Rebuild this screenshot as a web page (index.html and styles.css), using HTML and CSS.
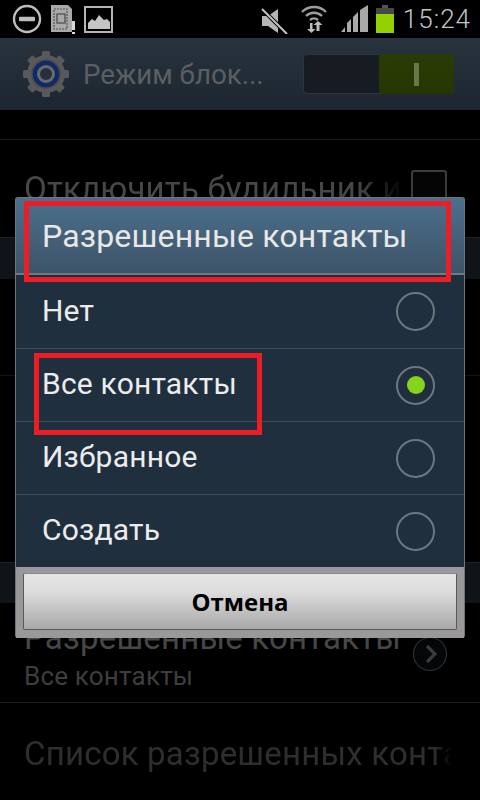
FILE: index.html
```html
<!DOCTYPE html>
<html lang="ru">
<head>
<meta charset="utf-8">
<title>Режим блокировки</title>
<link rel="stylesheet" href="styles.css">
</head>
<body>
<div class="screen">
  <header class="status">
    <div class="status-left">
      <svg class="ic" width="30" height="30" viewBox="0 0 30 30"><circle cx="15" cy="15" r="13" fill="none" stroke="#bdbdbd" stroke-width="2.4"/><rect x="7" y="12.8" width="16" height="4.4" rx="1" fill="#bdbdbd"/></svg>
      <svg class="ic" width="26" height="30" viewBox="0 0 26 30"><path d="M1 1h17l4 4v23H1z" fill="#a9a9a9"/><path d="M4 5h13v20H4z" fill="none" stroke="#555" stroke-width="1.2" stroke-dasharray="2 1"/><rect x="7" y="10" width="8" height="9" fill="#a9a9a9" stroke="#555" stroke-width="1.400"/><rect x="22" y="17" width="3" height="9" fill="#d8d8d8"/><rect x="22" y="28" width="3" height="2" fill="#ddd"/></svg>
      <svg class="ic" width="29" height="27" viewBox="0 0 29 27"><rect x="1" y="1" width="27" height="25" fill="none" stroke="#b5b5b5" stroke-width="2"/><path d="M4 23v-6l4-4 3 2 4-6 5 5 3-1 3 3v7z" fill="#c4c4c4"/></svg>
    </div>
    <div class="status-right">
      <svg class="ic ic-mute" width="27" height="26" viewBox="0 0 27 26"><path d="M1 8h6l10-7v24L7 18H1z" fill="#b5b5b5"/><path d="M1 1l25 25" stroke="#000" stroke-width="4"/><path d="M1 1l25 25" stroke="#c4c4c4" stroke-width="2"/></svg>
      <svg class="ic ic-wifi" width="26" height="28" viewBox="0 0 26 28"><path d="M1 7a17 17 0 0 1 24 0M5 11a11.500 11.500 0 0 1 16 0M9 15a6 6 0 0 1 8 0" fill="none" stroke="#9d9d9d" stroke-width="2.4"/><path d="M9 18v6H6l4.500 4 4-4h-3v-6zM17 16l-4.500 4h3v6h3v-6h3z" fill="#bdbdbd"/></svg>
      <svg class="ic ic-sig" width="29" height="28" viewBox="0 0 29 28"><path d="M1 27l4-5v5zM7 27v-9l4-4v13zM13 27V12l5-5v20zM20 27V5l8-5v27z" fill="#a9a9a9"/></svg>
      <svg class="ic ic-batt" width="18" height="28" viewBox="0 0 18 28"><rect x="6" y="0" width="6" height="3" fill="#555"/><rect x="0" y="3" width="18" height="8" fill="#484848"/><rect x="0" y="9" width="18" height="19" fill="#95d000"/></svg>
      <span class="time">15:24</span>
    </div>
  </header>

  <div class="actionbar">
    <svg class="gear" width="46" height="46" viewBox="0 0 46 46">
      <g fill="#59595b"><circle cx="23" cy="23" r="19"/><rect x="19" y="0" width="8" height="46" rx="1.500"/><rect x="19" y="0" width="8" height="46" rx="1.500" transform="rotate(45 23 23)"/><rect x="19" y="0" width="8" height="46" rx="1.500" transform="rotate(90 23 23)"/><rect x="19" y="0" width="8" height="46" rx="1.500" transform="rotate(135 23 23)"/></g>
      <circle cx="23" cy="23" r="14" fill="#0f2a68"/><circle cx="23" cy="23" r="14" fill="none" stroke="#4a4a4c" stroke-width="1.500"/><circle cx="23" cy="23" r="7.500" fill="#25303a" stroke="#6a6a6c" stroke-width="3"/>
    </svg>
    <span class="ab-title">Режим блок...</span>
    <div class="switch"><div class="switch-on"><span class="switch-grip"></span></div></div>
  </div>

  <main class="list">
    <div class="row-top"></div>
    <div class="row row-check">
      <span class="row-text fade">Отключить будильник и</span>
      <span class="check"></span>
    </div>
    <div class="band band-1"></div>
    <div class="gap-a"></div>
    <div class="gap-b"></div>
    <div class="band band-2"></div>
    <div class="row row-nav">
      <div class="row-body">
        <span class="row-text">Разрешенные контакты</span>
        <span class="row-sub">Все контакты</span>
      </div>
      <svg class="nav" width="36" height="36" viewBox="0 0 36 36"><circle cx="18" cy="18" r="16.500" fill="#050607" stroke="#2a2e31" stroke-width="1.200"/><path d="M15 10l8 8-8 8" fill="none" stroke="#343c44" stroke-width="3.200"/></svg>
    </div>
    <div class="row row-last"><span class="row-text dim">Список разрешенных конта</span></div>
  </main>

  <section class="dialog">
    <h1 class="dlg-title">Разрешенные контакты</h1>
    <ul class="options">
      <li class="option"><span>Нет</span><i class="radio"></i></li>
      <li class="option"><span>Все контакты</span><i class="radio on"></i></li>
      <li class="option"><span>Избранное</span><i class="radio"></i></li>
      <li class="option"><span>Создать</span><i class="radio"></i></li>
    </ul>
    <div class="dlg-foot"><button class="cancel">Отмена</button></div>
  </section>

  <div class="mark mark-title"></div>
  <div class="mark mark-option"></div>
</div>
</body>
</html>
```
FILE: styles.css
```css
* { box-sizing: border-box; }
html, body { margin: 0; padding: 0; background: #000; }
.screen { position: relative; width: 480px; height: 800px; overflow: hidden; background: #000; font-family: Roboto, "Noto Sans", sans-serif; }

.status { height: 38px; display: flex; justify-content: space-between; background: #000; }
.status-left { display: flex; align-items: center; gap: 8px; padding-left: 12px; }
.status-right { display: flex; align-items: center; padding-right: 9px; }
.ic { display: block; flex: none; }
.ic-mute { margin-top: 3px; }
.ic-wifi { margin-left: 13px; }
.ic-sig { margin-left: 13px; }
.ic-batt { margin-left: 7px; }
.time { margin-left: 9px; font-size: 26px; font-weight: 300; letter-spacing: 1px; color: #c4c4c4; line-height: 38px; }

.actionbar { height: 72px; display: flex; align-items: center; padding: 0 26px 0 23px; background: linear-gradient(#28333d, #1c2630); }
.gear { flex: none; }
.ab-title { margin-left: 14px; font-size: 27.7px; color: #5c5f62; flex: 1; white-space: nowrap; }
.switch { width: 151px; height: 40px; display: flex; justify-content: flex-end; background: #171c22; border: 1px solid #2e353c; border-radius: 4px; }
.switch-on { width: 75px; margin: -1px; display: flex; align-items: center; justify-content: center; background: linear-gradient(#2a3c04, #263603); border-radius: 4px; }
.switch-grip { width: 5px; height: 23px; background: #69774a; }

.list { display: flex; flex-direction: column; }
.row { display: flex; align-items: center; padding-left: 24px; overflow: hidden; }
.row-top { height: 30px; border-bottom: 1px solid #1a1a1a; }
.row-text { font-size: 33px; letter-spacing: .2px; color: #474747; white-space: nowrap; }
.row-check { height: 97px; }
.fade { width: 380px; overflow: hidden; -webkit-mask-image: linear-gradient(90deg, #000 88%, transparent); mask-image: linear-gradient(90deg, #000 88%, transparent); }
.check { width: 36px; height: 36px; margin: -2px 0 0 7px; border: 2px solid #3a3d40; border-radius: 3px; background: #050505; flex: none; }
.band { background: #101416; border-top: 1px solid #1d2226; }
.band-1 { height: 42px; }
.gap-a { height: 97px; border-bottom: 1px solid #141414; }
.gap-b { height: 186px; }
.band-2 { height: 41px; }
.row-nav { height: 100px; padding-top: 3px; padding-right: 32px; justify-content: space-between; border-bottom: 1px solid #1c1c1c; }
.row-body { display: flex; flex-direction: column; }
.row-sub { margin-top: 4px; font-size: 26px; letter-spacing: .2px; color: #3e3e3e; }
.nav { flex: none; }
.row-last { height: 96px; padding-top: 4px; }
.dim { width: 428px; overflow: hidden; color: #2e2e2e; -webkit-mask-image: linear-gradient(90deg, #000 96%, transparent); mask-image: linear-gradient(90deg, #000 96%, transparent); }

.dialog { position: absolute; left: 15px; top: 197px; width: 450px; height: 441px; display: flex; flex-direction: column; background: #1f2f3e; border: 1px solid #6a7680; border-bottom: 0; border-radius: 3px; }
.dlg-title { margin: 0; height: 77px; padding-left: 26px; font-size: 32px; font-weight: 400; letter-spacing: .18px; line-height: 76px; color: #e8e8e8; background: linear-gradient(#4c6f8c, #3d5468); border-bottom: 2px solid #6f7a82; white-space: nowrap; }
.options { list-style: none; margin: 0; padding: 0; }
.option { height: 73px; display: flex; align-items: center; justify-content: space-between; padding: 0 29px 0 26px; font-size: 30px; letter-spacing: .2px; color: #ececec; border-top: 1px solid #3e4d5b; }
.option:first-child { border-top: 0; }
.option span { margin-top: -3px; }
.radio { width: 39px; height: 39px; display: flex; align-items: center; justify-content: center; border: 2px solid #6d7780; border-radius: 50%; }
.radio.on::after { content: ""; width: 18px; height: 18px; border-radius: 50%; background: #86d41c; }
.dlg-foot { flex: 1; padding: 6px 7px 8px; background: #9a9899; }
.cancel { display: block; width: 100%; height: 100%; padding: 0; font: 700 24px "Open Sans", Roboto, sans-serif; color: #000; background: linear-gradient(#e4e4e4 0, #dedede 30%, #a9a9a9 100%); border: 1px solid #5a5a5a; border-top-color: #8a8a8a; border-radius: 2px; }

.mark { position: absolute; border: 5px solid #ee1c25; }
.mark-title { left: 24px; top: 201px; width: 427px; height: 81px; }
.mark-option { left: 34px; top: 353px; width: 228px; height: 82px; }
```
